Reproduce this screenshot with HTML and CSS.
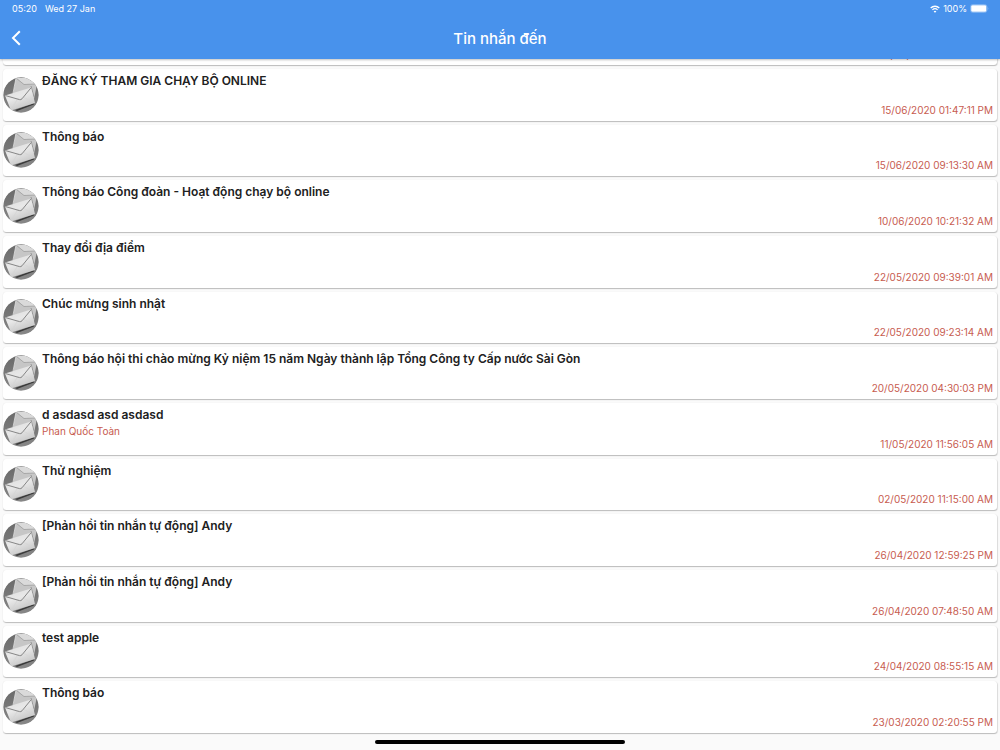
FILE: index.html
```html
<!DOCTYPE html>
<html lang="vi">
  <head>
    <meta charset="utf-8">
    <meta name="viewport" content="width=device-width, initial-scale=1">
    <title>Tin nhắn đến</title>
    <link rel="stylesheet" href="styles.css">
  </head>
  <body>
    <svg class="defs" width="0" height="0" aria-hidden="true">
      <defs>
        <linearGradient id="disc" x1="0" y1="0" x2="0" y2="1">
          <stop offset="0" stop-color="#6a6a6a"/>
          <stop offset="0.5" stop-color="#787878"/>
          <stop offset="1" stop-color="#888"/>
        </linearGradient>
        <linearGradient id="paper" x1="0" y1="0" x2="0.5" y2="1">
          <stop offset="0" stop-color="#dcdcdc"/>
          <stop offset="0.5" stop-color="#e8e8e8"/>
          <stop offset="1" stop-color="#c6c6c6"/>
        </linearGradient>
        <clipPath id="round"><circle cx="18" cy="18" r="17.7"/></clipPath>
      </defs>
      <symbol id="mail" viewBox="0 0 36 36">
        <g clip-path="url(#round)">
          <circle cx="18" cy="18" r="18" fill="url(#disc)"/>
          <path d="M13 0.5 L34 7 L31 22 L10 17 Z" fill="#c6c6c6"/>
          <path d="M13 0.5 L21 7.5 L34 7 L24 1 Z" fill="#dadada"/>
          <path d="M13 1 L21 7.5 L33 7" fill="none" stroke="#969696" stroke-width="0.7"/>
          <path d="M13 1 L10 16" fill="none" stroke="#e6e6e6" stroke-width="0.7"/>
          <path d="M28 9 L31 20" fill="none" stroke="#8c8c8c" stroke-width="0.8"/>
          <path d="M12 33 L31.5 26 L31 27.5 L14 34 Z" fill="#3a3a3a"/>
          <path d="M2 18.5 L28 10.5 L32 26 L8 33.5 Z" fill="url(#paper)"/>
          <path d="M8 33 L14.5 22 M31.5 26 L21 20.5" fill="none" stroke="#d4d4d4" stroke-width="0.6"/>
          <path d="M2.5 18.6 L16.5 22.6 Q18 23 19 21.8 L28 10.8" fill="none" stroke="#7b7b7b" stroke-width="0.9"/>
        </g>
      </symbol>
    </svg>

    <header class="top">
      <div class="status">
        <span class="time">05:20</span>
        <span class="day">Wed 27 Jan</span>
        <svg class="wifi" viewBox="0 0 10 8" width="10" height="8" aria-hidden="true">
          <path d="M0.7 3 A6.2 6.2 0 0 1 9.3 3" fill="none" stroke="#fff" stroke-width="1.3"/>
          <path d="M2.4 4.9 A3.8 3.8 0 0 1 7.6 4.9" fill="none" stroke="#fff" stroke-width="1.3"/>
          <path d="M5 7.8 L3.6 6.4 A2 2 0 0 1 6.4 6.4 Z" fill="#fff"/>
        </svg>
        <span>100%</span>
        <svg class="battery" viewBox="0 0 19 9" width="19" height="9" aria-hidden="true">
          <rect x="0.5" y="0.5" width="16.5" height="8" rx="2.4" fill="none" stroke="#8fbdf4" stroke-width="0.7"/>
          <rect x="1.2" y="1.2" width="15.1" height="6.6" rx="1.4" fill="#fff"/>
          <path d="M17.8 3 Q19 4.5 17.8 6 Z" fill="#8fbdf4"/>
        </svg>
      </div>
      <div class="bar">
        <button class="back" type="button" aria-label="Quay lại">
          <svg viewBox="0 0 10 16" width="10" height="16" aria-hidden="true">
            <path d="M8.8 1.2 L2 8 L8.8 14.8" fill="none" stroke="#fff" stroke-width="2"/>
          </svg>
        </button>
        <h1>Tin nhắn đến</h1>
      </div>
    </header>

    <div class="passed">
      <div class="card"><time>15/06/2020 01:50:11 PM</time></div>
    </div>

    <main class="list">
      <a class="card" href="#"><svg class="mail"><use href="#mail"/></svg><div class="text"><h2>ĐĂNG KÝ THAM GIA CHẠY BỘ ONLINE</h2></div><time>15/06/2020 01:47:11 PM</time></a>
      <a class="card" href="#"><svg class="mail"><use href="#mail"/></svg><div class="text"><h2>Thông báo</h2></div><time>15/06/2020 09:13:30 AM</time></a>
      <a class="card" href="#"><svg class="mail"><use href="#mail"/></svg><div class="text"><h2>Thông báo Công đoàn - Hoạt động chạy bộ online</h2></div><time>10/06/2020 10:21:32 AM</time></a>
      <a class="card" href="#"><svg class="mail"><use href="#mail"/></svg><div class="text"><h2>Thay đổi địa điểm</h2></div><time>22/05/2020 09:39:01 AM</time></a>
      <a class="card" href="#"><svg class="mail"><use href="#mail"/></svg><div class="text"><h2>Chúc mừng sinh nhật</h2></div><time>22/05/2020 09:23:14 AM</time></a>
      <a class="card" href="#"><svg class="mail"><use href="#mail"/></svg><div class="text"><h2>Thông báo hội thi chào mừng Kỷ niệm 15 năm Ngày thành lập Tổng Công ty Cấp nước Sài Gòn</h2></div><time>20/05/2020 04:30:03 PM</time></a>
      <a class="card" href="#"><svg class="mail"><use href="#mail"/></svg><div class="text"><h2>d asdasd asd asdasd</h2><p>Phan Quốc Toàn</p></div><time>11/05/2020 11:56:05 AM</time></a>
      <a class="card" href="#"><svg class="mail"><use href="#mail"/></svg><div class="text"><h2>Thử nghiệm</h2></div><time>02/05/2020 11:15:00 AM</time></a>
      <a class="card" href="#"><svg class="mail"><use href="#mail"/></svg><div class="text"><h2>[Phản hồi tin nhắn tự động] Andy</h2></div><time>26/04/2020 12:59:25 PM</time></a>
      <a class="card" href="#"><svg class="mail"><use href="#mail"/></svg><div class="text"><h2>[Phản hồi tin nhắn tự động] Andy</h2></div><time>26/04/2020 07:48:50 AM</time></a>
      <a class="card" href="#"><svg class="mail"><use href="#mail"/></svg><div class="text"><h2>test apple</h2></div><time>24/04/2020 08:55:15 AM</time></a>
      <a class="card" href="#"><svg class="mail"><use href="#mail"/></svg><div class="text"><h2>Thông báo</h2></div><time>23/03/2020 02:20:55 PM</time></a>
    </main>

    <footer class="home"><span class="pill"></span></footer>
  </body>
</html>
```
FILE: styles.css
```css
* {
	box-sizing: border-box;
}
body {
	margin: 0;
	min-height: 100vh;
	display: flex;
	flex-direction: column;
	background: #fafafa;
	color: #212121;
	font-family: Inter, "Liberation Sans", sans-serif;
}
h1, h2, p {
	margin: 0;
}
.defs {
	position: absolute;
}

/* header */
.top {
	position: relative;
	z-index: 1;
	background: #4892ec;
	color: #fff;
	box-shadow: 0 1px 2px rgba(0, 0, 0, 0.25);
}
.status {
	display: flex;
	align-items: center;
	height: 17px;
	padding: 0 11px 0 12px;
	font-size: 9px;
}
.day {
	margin: 0 auto 0 8px;
}
.wifi {
	margin-right: 3px;
}
.battery {
	margin-left: 3px;
}
.bar {
	display: grid;
	grid-template-columns: 40px 1fr 40px;
	align-items: center;
	height: 42px;
}
.back {
	display: flex;
	align-items: center;
	height: 40px;
	padding: 0 0 0 11px;
	border: 0;
	background: none;
	cursor: pointer;
}
.bar h1 {
	font-size: 15px;
	font-weight: 500;
	text-align: center;
}

/* messages */
.passed {
	display: flex;
	flex-direction: column;
	justify-content: flex-end;
	height: 10px;
	padding: 0 3px 4px;
	overflow: hidden;
}
.list {
	flex: 1;
	display: grid;
	grid-auto-rows: 1fr;
	gap: 4px;
	padding: 0 3px;
}
.card {
	display: flex;
	align-items: center;
	min-height: 50px;
	border-radius: 3px;
	background: #fff;
	box-shadow: 0 1px 1px rgba(0, 0, 0, 0.16), 1px 1px 1px rgba(0, 0, 0, 0.1), 0 0 1px rgba(0, 0, 0, 0.1);
	color: inherit;
	text-decoration: none;
}
.passed .card {
	flex-shrink: 0;
}
.mail {
	width: 36px;
	height: 36px;
}
.text {
	flex: 1;
	align-self: flex-start;
	padding: 4px 0 0 3px;
}
.text h2 {
	font-size: 12px;
	line-height: 16px;
	font-weight: 600;
}
.text p {
	padding-top: 1px;
	font-size: 10px;
	line-height: 14px;
	color: #c75c50;
}
.card time {
	align-self: flex-end;
	margin-left: auto;
	padding: 0 4px 4px 0;
	font-size: 10px;
	line-height: 14px;
	color: #c75c50;
}
.passed time {
	padding-bottom: 3px;
}

/* home indicator */
.home {
	display: flex;
	justify-content: center;
	height: 17px;
	padding-top: 7px;
}
.pill {
	width: 25%;
	height: 4px;
	border-radius: 2px;
	background: #000;
}
```
